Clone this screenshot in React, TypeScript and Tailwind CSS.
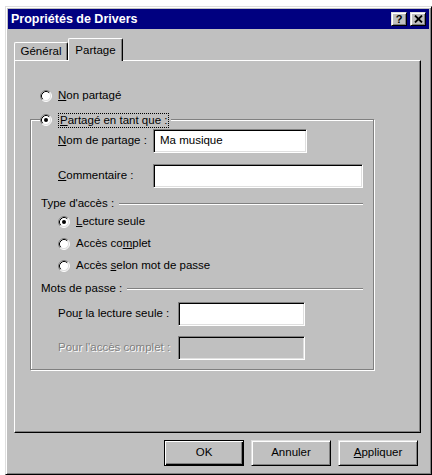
import type { ReactNode } from 'react'

function Radio({ checked }: { checked?: boolean }) {
  return (
    <svg width="12" height="12" viewBox="0 0 12 12" className="shrink-0">
      <circle cx="6" cy="6" r="5" fill="#fff" />
      <path d="M2.11 9.89A5.5 5.5 0 0 1 9.89 2.11" stroke="#808080" fill="none" />
      <path d="M9.89 2.11A5.5 5.5 0 0 1 2.11 9.89" stroke="#fff" fill="none" />
      <path d="M2.82 9.18A4.5 4.5 0 0 1 9.18 2.82" stroke="#000" fill="none" />
      <path d="M9.18 2.82A4.5 4.5 0 0 1 2.82 9.18" stroke="#dfdfdf" fill="none" />
      {checked && <circle cx="6" cy="6" r="2" fill="#000" />}
    </svg>
  )
}

function Option({ checked, children }: { checked?: boolean; children: ReactNode }) {
  return (
    <div className="flex h-[16px] items-center gap-[6px]">
      <Radio checked={checked} />
      <span>{children}</span>
    </div>
  )
}

function Field({ width, value, disabled }: { width: string; value?: string; disabled?: boolean }) {
  return (
    <div
      className={`flex h-[24px] items-center border border-[#808080] border-r-white border-b-white px-[6px] shadow-[inset_1px_1px_0_#000,inset_-1px_-1px_0_#dfdfdf] ${width} ${
        disabled ? 'bg-[#c0c0c0]' : 'bg-white'
      }`}
    >
      {value}
    </div>
  )
}

function Separator({ label }: { label: string }) {
  return (
    <div className="flex h-[14px] items-center gap-[5px] pl-[10px] pr-[10px]">
      <span>{label}</span>
      <div className="h-0 flex-1 border-t border-b border-t-[#808080] border-b-white" />
    </div>
  )
}

function Button({ children, primary }: { children: ReactNode; primary?: boolean }) {
  const frame = primary
    ? 'border border-black shadow-[inset_1px_1px_0_#fff,inset_-1px_-1px_0_#000,inset_-2px_-2px_0_#808080]'
    : 'border border-[#dfdfdf] border-r-black border-b-black shadow-[inset_1px_1px_0_#fff,inset_-1px_-1px_0_#808080]'
  return <div className={`flex h-[26px] w-[80px] items-center justify-center ${frame}`}>{children}</div>
}

export default function App() {
  return (
    <div className="h-[475px] w-[432px] overflow-hidden bg-white pt-[6px] pl-[5px] font-['Liberation_Sans',Arial,sans-serif] text-[11.5px] text-black">
      <div className="h-[469px] w-[427px] border border-[#dfdfdf] border-r-black border-b-black bg-[#c0c0c0] p-[2px] shadow-[inset_1px_1px_0_#fff,inset_-1px_-1px_0_#808080]">
        {/* title bar */}
        <div className="flex h-[20px] items-center justify-between bg-[#000080] pl-[3px] pr-[3px]">
          <span className="text-[12.5px] font-bold text-white">Propriétés de Drivers</span>
          <div className="flex gap-[3px]">
            <div className="flex h-[14px] w-[16px] items-center justify-center border border-[#dfdfdf] border-r-black border-b-black bg-[#c0c0c0] text-[11px] font-bold leading-none shadow-[inset_1px_1px_0_#fff,inset_-1px_-1px_0_#808080]">
              ?
            </div>
            <div className="flex h-[14px] w-[16px] items-center justify-center border border-[#dfdfdf] border-r-black border-b-black bg-[#c0c0c0] shadow-[inset_1px_1px_0_#fff,inset_-1px_-1px_0_#808080]">
              <svg width="9" height="8" viewBox="0 0 9 8">
                <path d="M1 0.5L8 7.5M8 0.5L1 7.5" stroke="#000" strokeWidth="1.8" />
              </svg>
            </div>
          </div>
        </div>

        <div className="pl-[6px]">
          {/* tabs */}
          <div className="mt-[9px] flex h-[22px] items-end">
            <div className="flex h-[18px] w-[54px] items-center justify-center rounded-t-[2px] border-t border-l border-white border-r border-r-black shadow-[inset_-1px_0_0_#808080]">
              Général
            </div>
            <div className="relative z-10 -mb-px flex h-[23px] w-[55px] items-start justify-center rounded-t-[2px] border-t border-l border-white border-r border-r-black bg-[#c0c0c0] pt-[3px] shadow-[inset_-1px_0_0_#808080]">
              Partage
            </div>
          </div>

          {/* panel */}
          <div className="h-[373px] w-[407px] border border-white border-r-black border-b-black shadow-[inset_-1px_-1px_0_#808080]">
            <div className="mt-[27px] ml-[25px]">
              <Option>
                <u>N</u>on partagé
              </Option>
            </div>

            <div className="mt-[15px] ml-[15px] w-[344px] border border-[#808080] pb-[9px] shadow-[inset_1px_1px_0_#fff,1px_1px_0_#fff]">
              <div className="-mt-[8px] ml-[9px] flex h-[16px] w-fit items-center gap-[6px] bg-[#c0c0c0] pr-[2px]">
                <Radio checked />
                <span className="border border-dotted border-black px-[1px] leading-[13px]">
                  <u>P</u>artagé en tant que :
                </span>
              </div>

              <div className="mt-[1px] flex items-center pl-[27px]">
                <span className="w-[95px]">
                  <u>N</u>om de partage :
                </span>
                <Field width="w-[154px]" value="Ma musique" />
              </div>

              <div className="mt-[11px] flex items-center pl-[27px]">
                <span className="w-[95px]">
                  <u>C</u>ommentaire :
                </span>
                <Field width="w-[210px]" />
              </div>

              <div className="mt-[9px]">
                <Separator label="Type d'accès :" />
              </div>

              <div className="mt-[3px] pl-[27px]">
                <Option checked>
                  <u>L</u>ecture seule
                </Option>
              </div>
              <div className="mt-[6px] pl-[27px]">
                <Option>
                  Accès co<u>m</u>plet
                </Option>
              </div>
              <div className="mt-[6px] pl-[27px]">
                <Option>
                  Accès <u>s</u>elon mot de passe
                </Option>
              </div>

              <div className="mt-[8px]">
                <Separator label="Mots de passe :" />
              </div>

              <div className="mt-[6px] flex items-center pl-[27px]">
                <span className="w-[120px]">
                  Pou<u>r</u> la lecture seule :
                </span>
                <Field width="w-[127px]" />
              </div>

              <div className="mt-[10px] flex items-center pl-[27px]">
                <span className="w-[120px] text-[#808080] [text-shadow:1px_1px_0_#fff]">Pour l'accès complet :</span>
                <Field width="w-[127px]" disabled />
              </div>
            </div>
          </div>

          {/* buttons */}
          <div className="mt-[7px] flex w-[407px] justify-end gap-[7px] pr-[3px]">
            <Button primary>OK</Button>
            <Button>Annuler</Button>
            <Button>
              <u>A</u>ppliquer
            </Button>
          </div>
        </div>
      </div>
    </div>
  )
}
